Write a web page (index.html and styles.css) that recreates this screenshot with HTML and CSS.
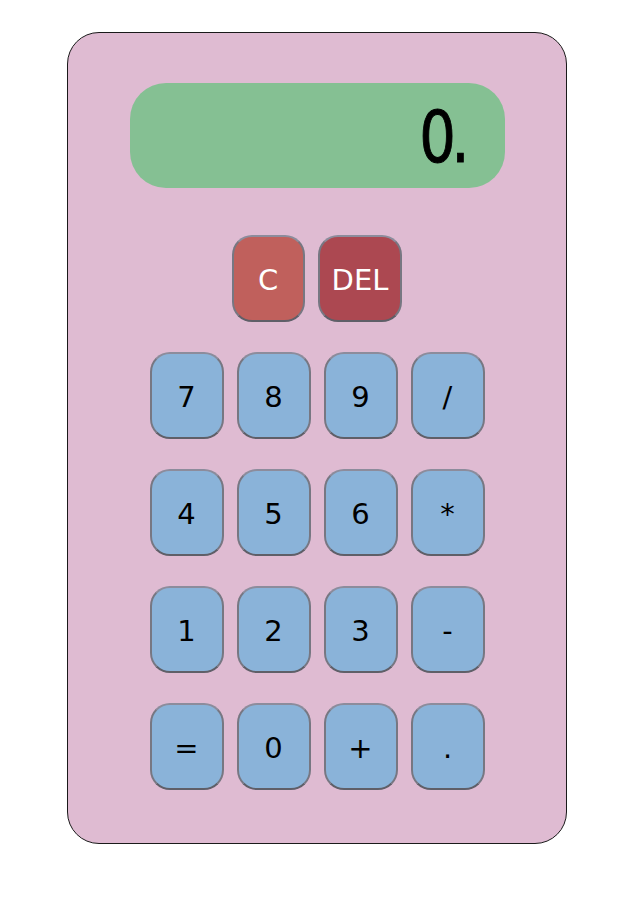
FILE: index.html
```html
<!DOCTYPE html>
<html>
<head>
<meta charset="utf-8">
<link rel="stylesheet" href="styles.css">
</head>
<body>
<div class="calc">
  <div class="display"><span class="digits">0.</span></div>
  <div class="keys">
    <div class="row">
      <button class="key key-clear">C</button>
      <button class="key key-del">DEL</button>
    </div>
    <div class="row">
      <button class="key">7</button>
      <button class="key">8</button>
      <button class="key">9</button>
      <button class="key">/</button>
    </div>
    <div class="row">
      <button class="key">4</button>
      <button class="key">5</button>
      <button class="key">6</button>
      <button class="key">*</button>
    </div>
    <div class="row">
      <button class="key">1</button>
      <button class="key">2</button>
      <button class="key">3</button>
      <button class="key">-</button>
    </div>
    <div class="row">
      <button class="key">=</button>
      <button class="key">0</button>
      <button class="key">+</button>
      <button class="key">.</button>
    </div>
  </div>
</div>
</body>
</html>
```
FILE: styles.css
```css
html, body {
  margin: 0;
  padding: 0;
  background: #ffffff;
}
body {
  padding: 32px 0 0 67px;
  font-family: "DejaVu Sans", Verdana, sans-serif;
}
.calc {
  box-sizing: border-box;
  width: 500px;
  height: 812px;
  background: #dfbbd2;
  border: 1px solid #1a1a1a;
  border-radius: 32px;
  padding: 50px 0 0 0;
  display: flex;
  flex-direction: column;
  align-items: center;
}
.display {
  box-sizing: border-box;
  width: 375px;
  height: 105px;
  background: #85c093;
  border-radius: 36px;
  display: flex;
  align-items: center;
  justify-content: flex-end;
  padding-right: 40px;
}
.digits {
  font-family: "DejaVu Sans", sans-serif;
  font-weight: normal;
  font-size: 72px;
  line-height: 1;
  color: #000;
  letter-spacing: -6px;
  transform: scaleX(0.8);
  transform-origin: right center;
  margin-top: 2px;
  -webkit-text-stroke: 1px #000;
}
.keys {
  margin-top: 47px;
  display: flex;
  flex-direction: column;
  gap: 30px;
}
.row {
  display: flex;
  justify-content: center;
  gap: 13px;
}
.key {
  box-sizing: border-box;
  min-width: 74px;
  height: 87px;
  padding: 3px 12px 0;
  border: 2px solid;
  border-color: #8c8c9c #777782 #5f5f68;
  border-radius: 20px;
  background: #8ab3d9;
  color: #000;
  font-family: "DejaVu Sans", Verdana, sans-serif;
  font-size: 29px;
  line-height: 1;
  display: flex;
  align-items: center;
  justify-content: center;
}
.key-clear {
  background: #c0605c;
  color: #fff;
  min-width: 73px;
}
.key-del {
  background: #ac4851;
  color: #fff;
}
```
